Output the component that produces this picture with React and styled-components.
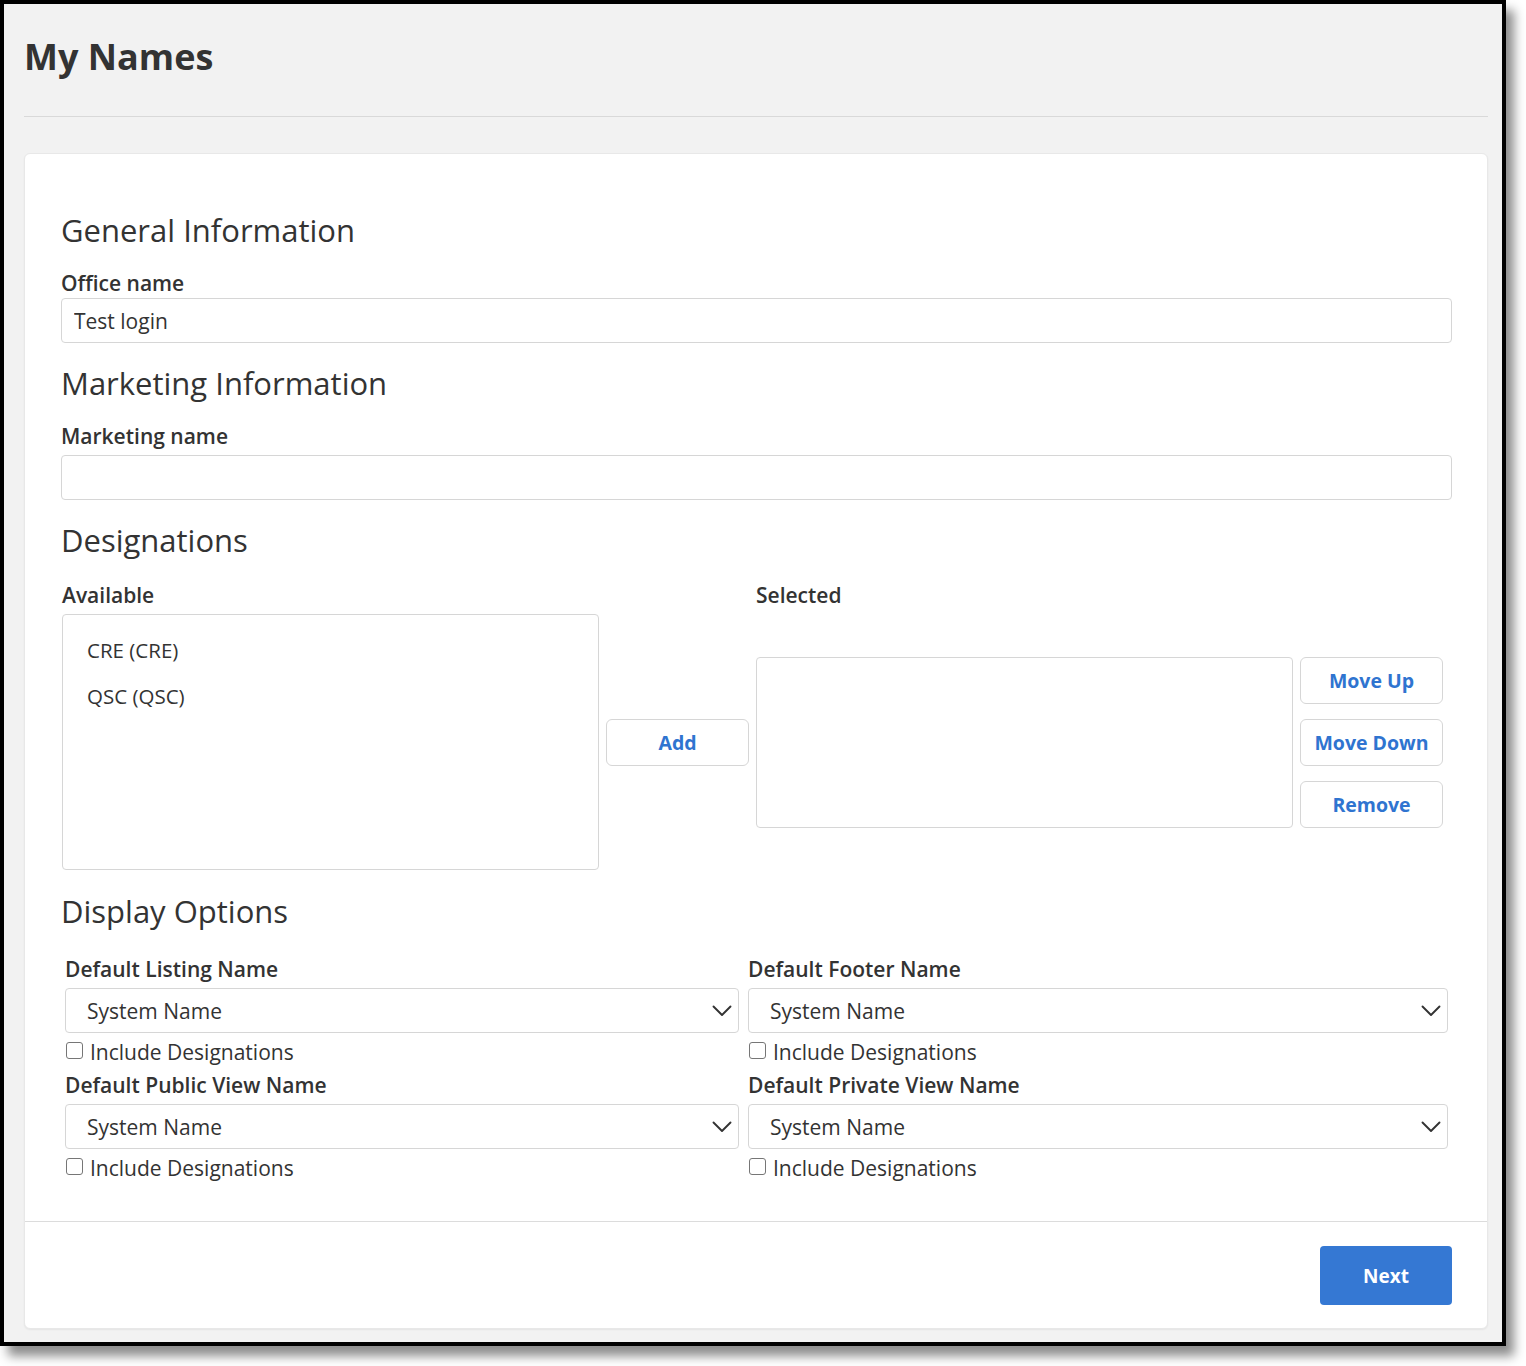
import React from "react";
import styled, { createGlobalStyle } from "styled-components";

const Global = createGlobalStyle`
  html, body { margin: 0; padding: 0; background: #ffffff; }
  body { font-family: "Open Sans", "Noto Sans", "Liberation Sans", sans-serif; color: #333333; }
  * { box-sizing: border-box; }
`;

const Page = styled.div`
  width: 1526px;
  min-height: 1366px;
  background: #fff;
`;

const Window = styled.div`
  width: 1506px;
  height: 1346px;
  border: 4px solid #000;
  background: #f2f2f2;
  box-shadow: 8px 10px 10px rgba(0, 0, 0, 0.45);
  padding: 0 14px 0 20px;
  display: flex;
  flex-direction: column;
`;

const PageHeader = styled.header`
  padding-top: 29px;
  border-bottom: 1px solid #d9d9d9;
  padding-bottom: 35px;
`;

const Title = styled.h1`
  margin: 0;
  font-size: 36px;
  line-height: 48px;
  font-weight: 700;
  color: #333;
`;

const Card = styled.section`
  margin-top: 36px;
  background: #fff;
  border-radius: 6px;
  border: 1px solid #e8e8e8;
  box-shadow: 0 1px 2px rgba(0, 0, 0, 0.06);
  display: flex;
  flex-direction: column;
`;

const CardBody = styled.div`
  padding: 56px 35px 34px 36px;
  display: flex;
  flex-direction: column;
`;

const SectionTitle = styled.h2`
  margin: ${(p) => p.$mt || 0}px 0 0 0;
  font-size: 31px;
  line-height: 40px;
  font-weight: 500;
  color: #333;
`;

const Label = styled.label`
  display: block;
  font-size: 21px;
  line-height: 28px;
  font-weight: 600;
  color: #333;
  margin-top: ${(p) => p.$mt || 0}px;
  margin-bottom: ${(p) => p.$mb || 0}px;
`;

const TextInput = styled.input`
  display: block;
  width: 100%;
  height: 45px;
  border: 1px solid #d6d6d6;
  border-radius: 4px;
  padding: 0 12px;
  font-family: inherit;
  font-size: 21px;
  color: #333;
  background: #fff;
  outline: none;
`;

const DesignGrid = styled.div`
  margin-top: 21px;
  margin-left: 1px;
  display: grid;
  grid-template-columns: 537px 143px 537px 143px;
  column-gap: 7px;
  row-gap: 5px;
  align-items: center;
`;

const GridLabel = styled(Label)`
  grid-column: ${(p) => p.$col};
  grid-row: 1;
`;

const ListBox = styled.div`
  grid-row: 2;
  grid-column: ${(p) => p.$col};
  height: ${(p) => p.$h}px;
  border: 1px solid #d6d6d6;
  border-radius: 4px;
  padding: ${(p) => (p.$items ? "21px 24px" : "0")};
  display: flex;
  flex-direction: column;
  gap: 18px;
`;

const ListItem = styled.div`
  font-size: 20.5px;
  line-height: 28px;
  color: #333;
`;

const OutlineButton = styled.button`
  height: 47px;
  width: 143px;
  border: 1px solid #d6d6d6;
  border-radius: 6px;
  background: #fff;
  color: #2f74d0;
  font-family: inherit;
  font-size: 19.5px;
  font-weight: 700;
  cursor: pointer;
  padding: 0;
`;

const AddCell = styled.div`
  grid-row: 2;
  grid-column: 2;
`;

const ButtonStack = styled.div`
  grid-row: 2;
  grid-column: 4;
  display: flex;
  flex-direction: column;
  gap: 15px;
`;

const OptionsGrid = styled.div`
  margin-top: 24px;
  margin-left: 4px;
  display: grid;
  grid-template-columns: 674px 700px;
  column-gap: 9px;
`;

const OptionField = styled.div`
  display: flex;
  flex-direction: column;
  gap: 5px;
  margin-bottom: 5px;
`;

const SelectWrap = styled.div`
  position: relative;
  height: 45px;
  border: 1px solid #d6d6d6;
  border-radius: 4px;
  background: #fff;
  display: flex;
  align-items: center;
  padding: 0 21px;
  font-size: 21px;
  color: #333;
`;

const Chevron = styled.svg`
  position: absolute;
  right: 6px;
  top: 50%;
  transform: translateY(-50%);
`;

const CheckRow = styled.label`
  display: flex;
  align-items: center;
  gap: 7px;
  font-size: 21px;
  line-height: 28px;
  color: #333;
`;

const Box = styled.span`
  width: 17px;
  height: 17px;
  border: 1.5px solid #767676;
  border-radius: 3px;
  background: #fff;
  margin-left: 1px;
  margin-top: -3px;
`;

const CardFooter = styled.div`
  border-top: 1px solid #dcdcdc;
  padding: 24px 35px 23px;
  display: flex;
  justify-content: flex-end;
`;

const PrimaryButton = styled.button`
  width: 132px;
  height: 59px;
  border: none;
  border-radius: 4px;
  background: #3578d3;
  color: #fff;
  font-family: inherit;
  font-size: 19px;
  font-weight: 700;
  cursor: pointer;
`;

function SelectField({ label }) {
  return (
    <OptionField>
      <Label>{label}</Label>
      <SelectWrap>
        System Name
        <Chevron width="20" height="20" viewBox="0 0 20 20" fill="none">
          <path d="M1.5 5.5 L10 14 L18.5 5.5" stroke="#333" strokeWidth="1.9" strokeLinecap="round" strokeLinejoin="round" />
        </Chevron>
      </SelectWrap>
      <CheckRow>
        <Box />
        Include Designations
      </CheckRow>
    </OptionField>
  );
}

export default function App() {
  return (
    <Page>
      <Global />
      <Window>
        <PageHeader>
          <Title>My Names</Title>
        </PageHeader>
        <Card>
          <CardBody>
            <SectionTitle>General Information</SectionTitle>
            <Label $mt={19} $mb={1}>Office name</Label>
            <TextInput defaultValue="Test login" readOnly />
            <SectionTitle $mt={20}>Marketing Information</SectionTitle>
            <Label $mt={19} $mb={5}>Marketing name</Label>
            <TextInput readOnly />
            <SectionTitle $mt={20}>Designations</SectionTitle>
            <DesignGrid>
              <GridLabel $col={1}>Available</GridLabel>
              <GridLabel $col={3}>Selected</GridLabel>
              <ListBox $col={1} $h={256} $items>
                <ListItem>CRE (CRE)</ListItem>
                <ListItem>QSC (QSC)</ListItem>
              </ListBox>
              <AddCell>
                <OutlineButton>Add</OutlineButton>
              </AddCell>
              <ListBox $col={3} $h={171} />
              <ButtonStack>
                <OutlineButton>Move Up</OutlineButton>
                <OutlineButton>Move Down</OutlineButton>
                <OutlineButton>Remove</OutlineButton>
              </ButtonStack>
            </DesignGrid>
            <SectionTitle $mt={21}>Display Options</SectionTitle>
            <OptionsGrid>
              <SelectField label="Default Listing Name" />
              <SelectField label="Default Footer Name" />
              <SelectField label="Default Public View Name" />
              <SelectField label="Default Private View Name" />
            </OptionsGrid>
          </CardBody>
          <CardFooter>
            <PrimaryButton>Next</PrimaryButton>
          </CardFooter>
        </Card>
      </Window>
    </Page>
  );
}
